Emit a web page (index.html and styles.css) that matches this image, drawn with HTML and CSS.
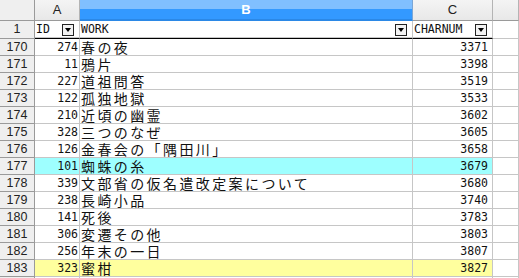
FILE: index.html
```html
<!DOCTYPE html>
<html>
<head>
<meta charset="utf-8">
<link rel="stylesheet" href="styles.css">
</head>
<body>
<div class="sheet">
  <div class="row colhdr">
    <div class="rh corner"></div>
    <div class="c a ch">A</div>
    <div class="c b ch sel">B</div>
    <div class="c cc ch">C</div>
    <div class="c rest ch"></div>
  </div>
  <div class="row hdr">
    <div class="rh">1</div>
    <div class="c a hd"><span>ID</span><i class="btn"></i></div>
    <div class="c b hd"><span>WORK</span><i class="btn"></i></div>
    <div class="c cc hd"><span>CHARNUM</span><i class="btn"></i></div>
    <div class="c rest"></div>
  </div>
  <div class="row"><div class="rh">170</div><div class="c a num">274</div><div class="c b jp">春の夜</div><div class="c cc num">3371</div><div class="c rest"></div></div>
  <div class="row"><div class="rh">171</div><div class="c a num">11</div><div class="c b jp">鴉片</div><div class="c cc num">3398</div><div class="c rest"></div></div>
  <div class="row"><div class="rh">172</div><div class="c a num">227</div><div class="c b jp">道祖問答</div><div class="c cc num">3519</div><div class="c rest"></div></div>
  <div class="row"><div class="rh">173</div><div class="c a num">122</div><div class="c b jp">孤独地獄</div><div class="c cc num">3533</div><div class="c rest"></div></div>
  <div class="row"><div class="rh">174</div><div class="c a num">210</div><div class="c b jp">近頃の幽霊</div><div class="c cc num">3602</div><div class="c rest"></div></div>
  <div class="row"><div class="rh">175</div><div class="c a num">328</div><div class="c b jp">三つのなぜ</div><div class="c cc num">3605</div><div class="c rest"></div></div>
  <div class="row"><div class="rh">176</div><div class="c a num">126</div><div class="c b jp">金春会の「隅田川」</div><div class="c cc num">3658</div><div class="c rest"></div></div>
  <div class="row cyan"><div class="rh">177</div><div class="c a num">101</div><div class="c b jp">蜘蛛の糸</div><div class="c cc num">3679</div><div class="c rest"></div></div>
  <div class="row"><div class="rh">178</div><div class="c a num">339</div><div class="c b jp">文部省の仮名遣改定案について</div><div class="c cc num">3680</div><div class="c rest"></div></div>
  <div class="row"><div class="rh">179</div><div class="c a num">238</div><div class="c b jp">長崎小品</div><div class="c cc num">3740</div><div class="c rest"></div></div>
  <div class="row"><div class="rh">180</div><div class="c a num">141</div><div class="c b jp">死後</div><div class="c cc num">3783</div><div class="c rest"></div></div>
  <div class="row"><div class="rh">181</div><div class="c a num">306</div><div class="c b jp">変遷その他</div><div class="c cc num">3803</div><div class="c rest"></div></div>
  <div class="row"><div class="rh">182</div><div class="c a num">256</div><div class="c b jp">年末の一日</div><div class="c cc num">3807</div><div class="c rest"></div></div>
  <div class="row yellow"><div class="rh">183</div><div class="c a num">323</div><div class="c b jp">蜜柑</div><div class="c cc num">3827</div><div class="c rest"></div></div>
  <div class="row"><div class="rh"></div><div class="c a"></div><div class="c b"></div><div class="c cc"></div><div class="c rest"></div></div>
</div>
</body>
</html>
```
FILE: styles.css
```css
html, body {
  margin: 0;
  padding: 0;
  background: #ffffff;
  overflow: hidden;
}
.sheet {
  width: 519px;
  height: 278px;
  overflow: hidden;
  display: flex;
  flex-direction: column;
}
.row {
  display: flex;
  height: 17px;
  flex: none;
}
.rh {
  width: 35px;
  flex: none;
  background: #efefef;
  border-right: 1px solid #9a9a9a;
  border-bottom: 1px solid #9a9a9a;
  box-sizing: border-box;
  font-family: "Liberation Sans", Arial, sans-serif;
  font-size: 12.5px;
  color: #222;
  text-align: center;
  line-height: 16px;
}
.c {
  box-sizing: border-box;
  border-right: 1px solid #c6c6c6;
  border-bottom: 1px solid #c6c6c6;
  flex: none;
  overflow: hidden;
  white-space: nowrap;
  font-family: "DejaVu Sans Mono", monospace;
  font-size: 11.5px;
  color: #111;
  line-height: 16px;
}
.a { width: 45px; }
.b { width: 333px; }
.cc { width: 80px; }
.rest { flex: 1; }
.num {
  text-align: right;
  padding-right: 4px;
}
.a.num { padding-right: 1px; }
.jp {
  font-family: "Noto Sans CJK JP", sans-serif;
  font-size: 14px;
  letter-spacing: 2.4px;
  padding-left: 1px;
  line-height: 16px;
}
.cyan .c:not(.rest) { background: #9effff; }
.yellow .c:not(.rest) { background: #ffff9e; }

/* column header row */
.colhdr { height: 21px; }
.ch {
  background: linear-gradient(#f4f4f4, #e8e8e8);
  border-right: 1px solid #b4b4b4;
  border-bottom: 1px solid #9a9a9a;
  font-family: "Liberation Sans", Arial, sans-serif;
  font-size: 13px;
  text-align: center;
  line-height: 20px;
  color: #222;
}
.ch.sel {
  background: linear-gradient(#80bfff 0, #80bfff 9px, #3399ff 9px, #3399ff 19px, #2b88e6 19px);
  color: #fff;
  font-weight: bold;
  border-right-color: #7aa6d6;
  border-bottom-color: #2b88e6;
}

/* header row with filters */
.hdr { height: 18px; }
.hdr .rh {
  height: 18px;
  line-height: 17px;
}
.hd {
  position: relative;
  height: 18px;
  border-bottom: 1px solid #000;
  box-shadow: inset 0 -1px 0 #c6c6c6;
  line-height: 16px;
  padding-left: 1px;
}
.btn {
  position: absolute;
  top: 3px;
  right: 5px;
  width: 12px;
  height: 12px;
  box-sizing: border-box;
  border: 1px solid #222;
  background: #f2f2f2;
}
.btn::after {
  content: "";
  position: absolute;
  left: 2px;
  top: 3px;
  border-left: 3px solid transparent;
  border-right: 3px solid transparent;
  border-top: 4px solid #000;
}
```
